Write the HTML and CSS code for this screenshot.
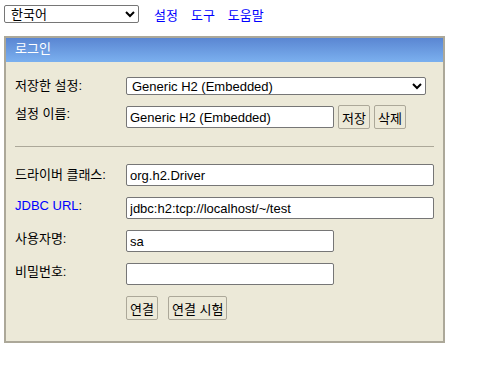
FILE: index.html
```html
<!DOCTYPE html>
<html lang="ko">
<head>
    <meta charset="UTF-8">
    <title>H2 Console</title>
    <link rel="stylesheet" href="styles.css">
</head>
<body>
    <div class="toolbar">
        <select class="lang-select">
            <option>한국어</option>
        </select>
        <a href="#" class="nav-link">설정</a>
        <a href="#" class="nav-link">도구</a>
        <a href="#" class="nav-link">도움말</a>
    </div>

    <div class="login">
        <div class="login-header">로그인</div>
        <div class="login-body">
            <div class="row row-setting">
                <label class="field-label">저장한 설정:</label>
                <select class="field setting-select">
                    <option>Generic H2 (Embedded)</option>
                </select>
            </div>

            <div class="row row-name">
                <label class="field-label">설정 이름:</label>
                <input type="text" class="field field-short field-name" value="Generic H2 (Embedded)">
                <button class="btn btn-small">저장</button>
                <button class="btn btn-small">삭제</button>
            </div>

            <hr class="divider">

            <div class="row row-driver">
                <label class="field-label label-driver">드라이버 클래스:</label>
                <input type="text" class="field field-long" value="org.h2.Driver">
            </div>

            <div class="row">
                <label class="field-label"><a href="#" class="help-link">JDBC URL</a>:</label>
                <input type="text" class="field field-long" value="jdbc:h2:tcp://localhost/~/test">
            </div>

            <div class="row">
                <label class="field-label">사용자명:</label>
                <input type="text" class="field field-short" value="sa">
            </div>

            <div class="row">
                <label class="field-label">비밀번호:</label>
                <input type="password" class="field field-short" value="">
            </div>

            <div class="row actions">
                <button class="btn">연결</button>
                <button class="btn btn-test">연결 시험</button>
            </div>
        </div>
    </div>
</body>
</html>
```

FILE: styles.css
```css
body {
    margin: 0;
    background-color: #FFFFFF;
    color: #000000;
    font-family: Arial, "Liberation Sans", "Noto Sans CJK KR", sans-serif;
    font-size: 13px;
}

.toolbar {
    display: flex;
    align-items: center;
    height: 18px;
    padding: 5px 4px 0;
}

.lang-select {
    width: 135px;
    height: 18px;
    font: inherit;
    padding: 0 2px;
    border: 1px solid #767676;
    border-radius: 2px;
    background-color: #FFFFFF;
}

.nav-link {
    color: #0000FF;
    text-decoration: none;
    margin-left: 13px;
}

.lang-select + .nav-link {
    margin-left: 15px;
}

.login {
    width: 437px;
    margin: 13px 0 0 4px;
    border: 2px solid #ACA899;
    background-color: #ECE9D8;
}

.login-header {
    height: 24px;
    line-height: 22px;
    padding-left: 9px;
    color: #FFFFFF;
    background: linear-gradient(#5A86D2, #7BB0EF);
}

.login-body {
    padding: 15px 9px 21px;
}

.row {
    display: flex;
    align-items: flex-start;
    margin-top: 11px;
}

.row-setting {
    margin-top: 0;
}

.row-name {
    margin-top: 10px;
}

.row-driver {
    margin-top: 17px;
}

.field-label {
    flex: none;
    width: 111px;
    line-height: 15px;
    padding-top: 1px;
}

.label-driver {
    padding-top: 3px;
}

.help-link {
    color: #0000FF;
    text-decoration: none;
}

.field {
    box-sizing: border-box;
    height: 22px;
    margin: 0;
    padding: 0 3px;
    font: inherit;
    color: #000000;
    background-color: #FFFFFF;
    border: 1px solid #767676;
    border-radius: 2px;
}

.setting-select {
    width: 300px;
    height: 18px;
    padding: 0 1px;
}

.field-short {
    width: 208px;
}

.field-name {
    margin-top: 1px;
}

.field-long {
    width: 308px;
}

.divider {
    margin: 17px 0 0;
    width: 419px;
    border: none;
    border-top: 1px solid #ACA899;
}

.btn {
    box-sizing: border-box;
    height: 24px;
    padding: 0 3px;
    margin: 0;
    font: inherit;
    color: #000000;
    background-color: #ECE9D8;
    border: 1px solid #ACA899;
    border-radius: 2px;
}

.btn-small {
    margin-left: 4px;
}

.btn-test {
    margin-left: 10px;
}

.actions {
    padding-left: 111px;
}
```
